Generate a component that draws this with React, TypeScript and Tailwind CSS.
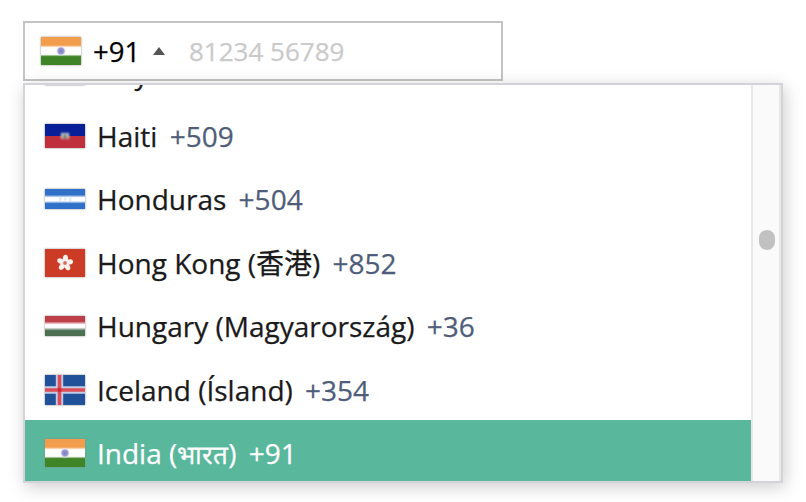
import type { ReactNode } from "react";

const flagShadow = "shadow-[0_0_2px_0_#888]";

function IndiaFlag({ id }: { id: string }) {
  return (
    <svg viewBox="0 0 40 28" className={`block h-7 w-10 ${flagShadow}`}>
      <defs>
        <linearGradient id={id} x1="0" y1="0" x2="0" y2="1">
          <stop offset=".29" stopColor="#f29d4b" />
          <stop offset=".38" stopColor="#fff" />
          <stop offset=".62" stopColor="#fff" />
          <stop offset=".7" stopColor="#3f8527" />
        </linearGradient>
        <radialGradient id={id + "c"}>
          <stop offset="0" stopColor="#7c7cc4" />
          <stop offset=".55" stopColor="#9a9ad2" />
          <stop offset="1" stopColor="#fff" stopOpacity="0" />
        </radialGradient>
      </defs>
      <rect width="40" height="28" fill={`url(#${id})`} />
      <circle cx="20" cy="14" r="5.4" fill={`url(#${id}c)`} />
    </svg>
  );
}

function GuyanaFlag() {
  return (
    <svg viewBox="0 0 40 24" className={`block h-6 w-10 ${flagShadow}`}>
      <rect width="40" height="24" fill="#399408" />
      <path d="M0 0 40 12 0 24Z" fill="#ffd100" />
      <path d="M0 0 20 12 0 24Z" fill="#bf0000" />
    </svg>
  );
}

function HaitiFlag() {
  return (
    <svg viewBox="0 0 40 24" className={`block h-6 w-10 ${flagShadow}`}>
      <defs>
        <filter id="haiti" x="-30%" y="-30%" width="160%" height="160%" colorInterpolationFilters="sRGB">
          <feGaussianBlur stdDeviation="0.8" />
        </filter>
      </defs>
      <rect width="40" height="12" fill="#091f98" />
      <rect y="12" width="40" height="12" fill="#c02f3c" />
      <g filter="url(#haiti)">
        <rect x="16" y="9" width="8" height="6" fill="#d5d5d3" />
        <rect x="18" y="10" width="4" height="3" fill="#8f9488" />
        <rect x="17.5" y="12.5" width="5" height="2" fill="#75765f" />
      </g>
    </svg>
  );
}

function HondurasFlag() {
  return (
    <svg viewBox="0 0 40 20" className={`block h-5 w-10 ${flagShadow}`}>
      <defs>
        <linearGradient id="honduras" x1="0" y1="0" x2="0" y2="1">
          <stop offset=".29" stopColor="#3070c8" />
          <stop offset=".43" stopColor="#fff" />
          <stop offset=".6" stopColor="#fff" />
          <stop offset=".73" stopColor="#3070c8" />
        </linearGradient>
      </defs>
      <rect width="40" height="20" fill="url(#honduras)" />
      <g fill="#cfe4f5" opacity=".7">
        <rect x="14" y="7.5" width="2.5" height="5" />
        <rect x="19" y="8.5" width="2.5" height="3" />
        <rect x="24" y="7.5" width="2.5" height="5" />
      </g>
    </svg>
  );
}

function HongKongFlag() {
  return (
    <svg viewBox="0 0 40 28" className={`block h-7 w-10 ${flagShadow}`}>
      <defs>
        <filter id="hk" x="-20%" y="-20%" width="140%" height="140%" colorInterpolationFilters="sRGB">
          <feGaussianBlur stdDeviation="0.7" />
        </filter>
      </defs>
      <rect width="40" height="28" fill="#cc3b25" />
      <g filter="url(#hk)">
        {[5, 77, 149, 221, 293].map((a) => (
          <ellipse key={a} cx="20" cy="9.7" rx="2.6" ry="4" fill="#fdf1ee" transform={`rotate(${a} 20 14)`} />
        ))}
        <circle cx="20" cy="14" r="1.9" fill="#d9705d" />
      </g>
    </svg>
  );
}

function HungaryFlag() {
  return (
    <svg viewBox="0 0 40 20" className={`block h-5 w-10 ${flagShadow}`}>
      <defs>
        <linearGradient id="hungary" x1="0" y1="0" x2="0" y2="1">
          <stop offset=".27" stopColor="#bd3e48" />
          <stop offset=".43" stopColor="#fff" />
          <stop offset=".57" stopColor="#fff" />
          <stop offset=".73" stopColor="#4d7053" />
        </linearGradient>
      </defs>
      <rect width="40" height="20" fill="url(#hungary)" />
    </svg>
  );
}

function IcelandFlag() {
  return (
    <svg viewBox="0 0 40 30" className={`block h-[30px] w-10 ${flagShadow}`}>
      <defs>
        <filter id="iceland" colorInterpolationFilters="sRGB">
          <feGaussianBlur stdDeviation="0.7" />
        </filter>
      </defs>
      <rect width="40" height="30" fill="#205199" />
      <g filter="url(#iceland)">
        <path d="M14.5 -3V33M-3 15H43" stroke="#c3cce4" strokeWidth="7.4" />
        <path d="M14.5 -3V33M-3 15H43" stroke="#dc4d59" strokeWidth="3.6" />
        <rect x="12.7" y="13.2" width="3.6" height="3.6" fill="#cf2637" />
      </g>
    </svg>
  );
}

type Country = { id: string; name: ReactNode; code?: string; flag: ReactNode; active?: boolean };

const countries: Country[] = [
  { id: "gy", name: "Guyana", flag: <GuyanaFlag /> },
  { id: "ht", name: "Haiti", code: "+509", flag: <HaitiFlag /> },
  { id: "hn", name: "Honduras", code: "+504", flag: <HondurasFlag /> },
  { id: "hk", name: "Hong Kong (香港)", code: "+852", flag: <HongKongFlag /> },
  { id: "hu", name: "Hungary (Magyarország)", code: "+36", flag: <HungaryFlag /> },
  { id: "is", name: "Iceland (Ísland)", code: "+354", flag: <IcelandFlag /> },
  {
    id: "in",
    name: (
      <>
        India (<span className="text-[26px]">भारत</span>)
      </>
    ),
    code: "+91",
    flag: <IndiaFlag id="in-row" />,
    active: true,
  },
];

export default function App() {
  return (
    <div className="h-[502px] w-[806px] overflow-hidden bg-white pt-[21px] pl-[23px] font-['Open_Sans','Noto_Sans_CJK_TC',sans-serif] text-[28px] text-[#1a1a1a] [-webkit-text-stroke:0.25px_currentColor]">
      <div className="flex h-[60px] w-[480px] items-center border-2 border-[#c4c4c4] bg-white pl-4">
        <IndiaFlag id="in-input" />
        <span className="mt-px ml-3 w-[47px] leading-10 whitespace-nowrap text-[27.5px] text-black">+91</span>
        <svg viewBox="0 0 12 8" className="ml-[13px] h-2 w-3">
          <path d="M0 8 6 0 12 8Z" fill="#555" />
        </svg>
        <span className="ml-6 text-[26px] text-[#cacaca]">81234 56789</span>
      </div>
      <div className="mt-0.5 flex h-[400px] w-[760px] overflow-hidden border-2 border-[#d3d3d8] bg-white shadow-[2px_4px_16px_rgba(0,0,0,0.2)]">
        <div className="h-full min-w-0 flex-1 overflow-hidden">
          <ul className="-mt-[45.4px]">
            {countries.map((c) => (
              <li
                key={c.id}
                className={`flex h-[63.4px] items-center pl-5 whitespace-nowrap ${c.active ? "bg-[#59b79c] text-white" : ""}`}
              >
                <span className="mt-[2.8px]">{c.flag}</span>
                <span className="mt-[2.8px] ml-3 h-10 leading-10">{c.name}</span>
                {c.code && (
                  <span className={`mt-[2.8px] ml-[12.3px] h-10 leading-10 ${c.active ? "" : "text-[#4f5d7a]"}`}>{c.code}</span>
                )}
              </li>
            ))}
          </ul>
        </div>
        <div className="flex w-[30px] flex-col border-x-2 border-[#e8e8e8] bg-[#fafafa] pt-[145px] pl-1.5">
          <div className="h-5 w-4 rounded-full bg-[#c1c1c1]" />
        </div>
      </div>
    </div>
  );
}
